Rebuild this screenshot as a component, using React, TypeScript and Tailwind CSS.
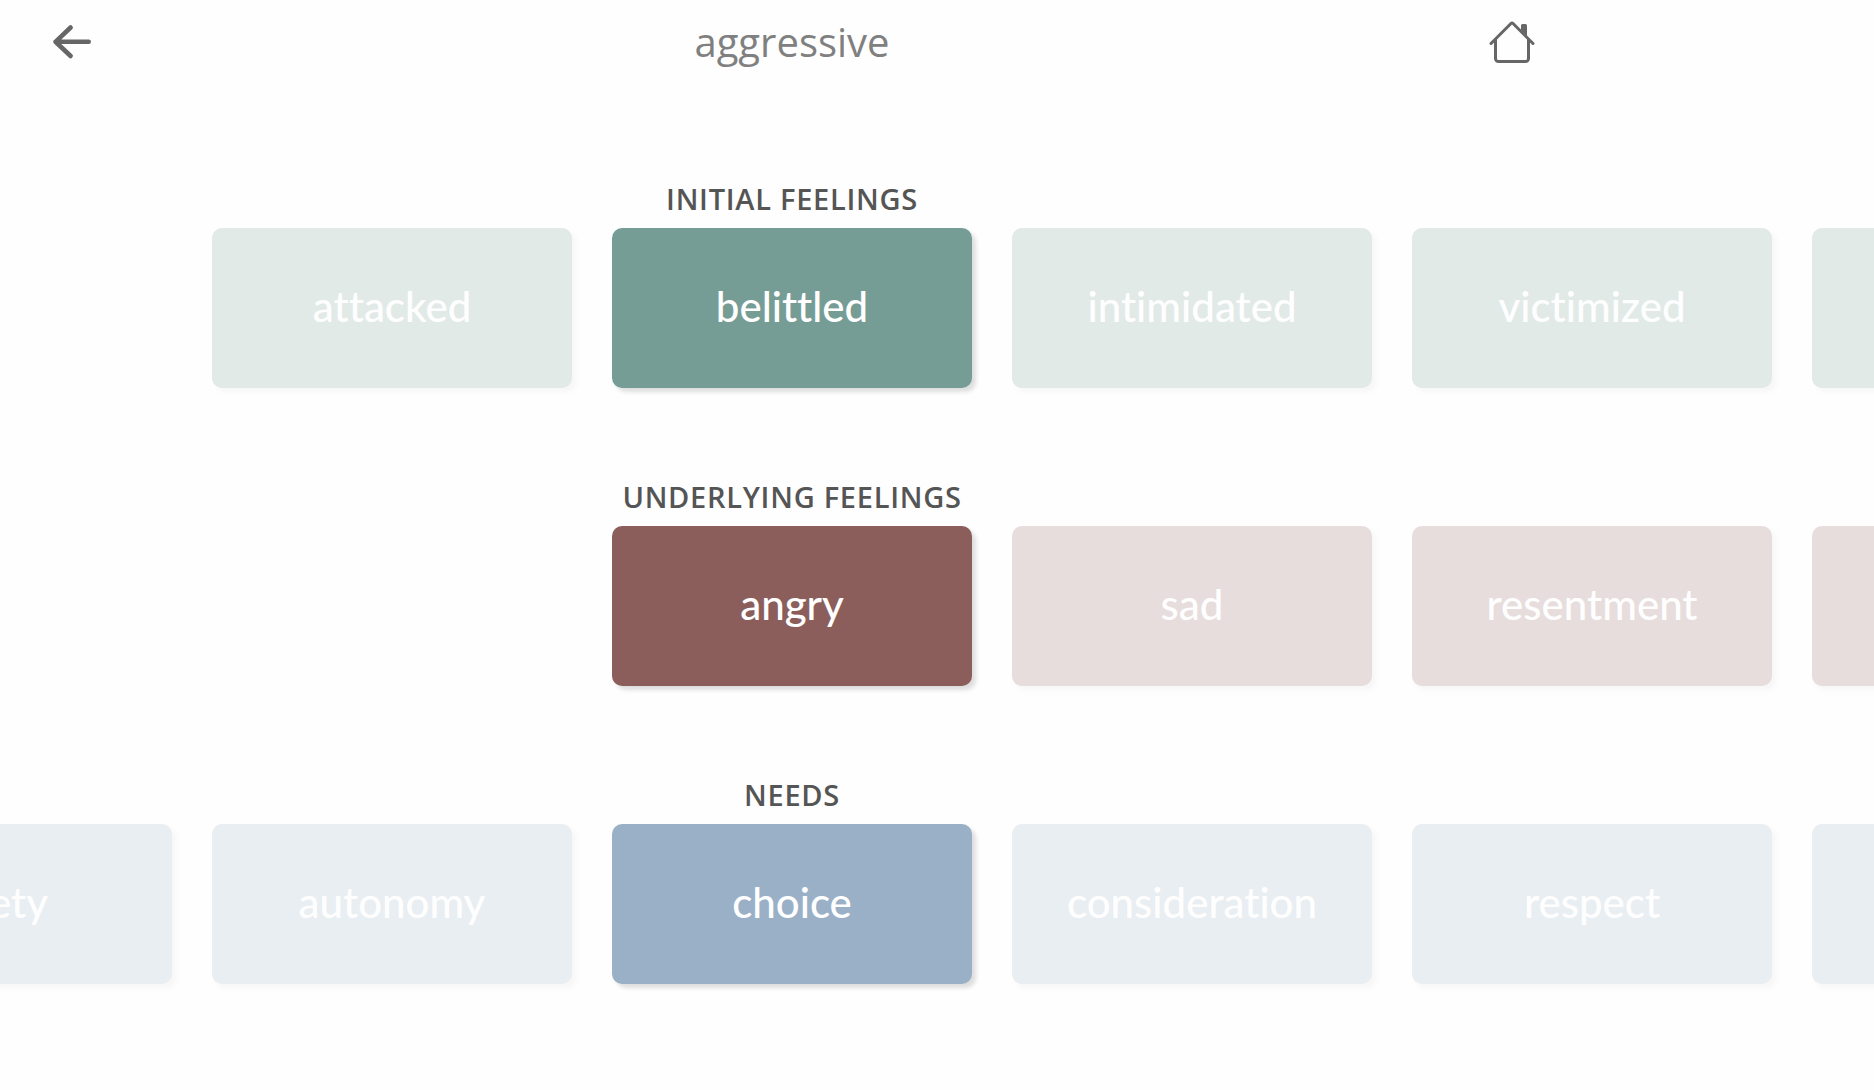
type Group = {
  title: string;
  color: string;
  active: number;
  words: string[];
};

const CARD_STEP = 400;

const groups: Group[] = [
  {
    title: "INITIAL FEELINGS",
    color: "bg-[#769d95]",
    active: 1,
    words: ["attacked", "belittled", "intimidated", "victimized", ""],
  },
  {
    title: "UNDERLYING FEELINGS",
    color: "bg-[#8b5e5b]",
    active: 0,
    words: ["angry", "sad", "resentment", ""],
  },
  {
    title: "NEEDS",
    color: "bg-[#9ab0c7]",
    active: 2,
    words: ["safety", "autonomy", "choice", "consideration", "respect", ""],
  },
];

function BackIcon() {
  return (
    <svg viewBox="0 0 48 48" className="size-12" fill="none" stroke="currentColor" strokeWidth="4.6" strokeLinecap="round" strokeLinejoin="round" aria-hidden="true">
      <path d="M40.7 23.8H7.5M22.6 9.5 7.5 23.8 22.6 38" />
    </svg>
  );
}

function HomeIcon() {
  return (
    <svg viewBox="0 0 16 16" className="size-12" fill="currentColor" aria-hidden="true">
      <path fillRule="evenodd" d="M2 13.5V7h1v6.5a.5.5 0 0 0 .5.5h9a.5.5 0 0 0 .5-.5V7h1v6.5a1.5 1.5 0 0 1-1.5 1.5h-9A1.5 1.5 0 0 1 2 13.5zm11-11V6l-2-2V2.5a.5.5 0 0 1 .5-.5h1a.5.5 0 0 1 .5.5z" />
      <path fillRule="evenodd" d="M7.293 1.5a1 1 0 0 1 1.414 0l6.647 6.646a.5.5 0 0 1-.708.708L8 2.207 1.354 8.854a.5.5 0 1 1-.708-.708L7.293 1.5z" />
    </svg>
  );
}

function Carousel({ group }: { group: Group }) {
  return (
    <section>
      <h2 className="text-center text-[29px] leading-[38px] font-semibold tracking-wide text-[#555]">{group.title}</h2>
      <div className="mt-[10px] pl-[calc(50%-180px)]">
        <div className="flex gap-10" style={{ marginLeft: -group.active * CARD_STEP }}>
          {group.words.map((word, i) => (
            <button
              key={i}
              type="button"
              aria-label={word || "more"}
              aria-pressed={i === group.active}
              className={`h-40 w-90 shrink-0 rounded-[10px] pb-1 font-['Lato',sans-serif] text-[42px] leading-12 font-medium text-white shadow-[4px_4px_4px_rgba(0,0,0,0.13)] [font-variant-ligatures:none] ${group.color} ${i === group.active ? "" : "opacity-20"}`}
            >
              {word}
            </button>
          ))}
        </div>
      </div>
    </section>
  );
}

export default function App() {
  return (
    <div className="min-h-screen overflow-hidden bg-[#fefefe] pr-[290px] font-['Open_Sans',sans-serif]">
      <header className="flex items-center justify-between px-12 pt-[18px] text-[#666]">
        <button type="button" aria-label="Back">
          <BackIcon />
        </button>
        <h1 className="text-[40px] leading-12 font-medium text-[#808080]">aggressive</h1>
        <a href="#home" aria-label="Home">
          <HomeIcon />
        </a>
      </header>
      <main className="flex flex-col gap-[90px] pt-[114px]">
        {groups.map((group) => (
          <Carousel key={group.title} group={group} />
        ))}
      </main>
    </div>
  );
}
